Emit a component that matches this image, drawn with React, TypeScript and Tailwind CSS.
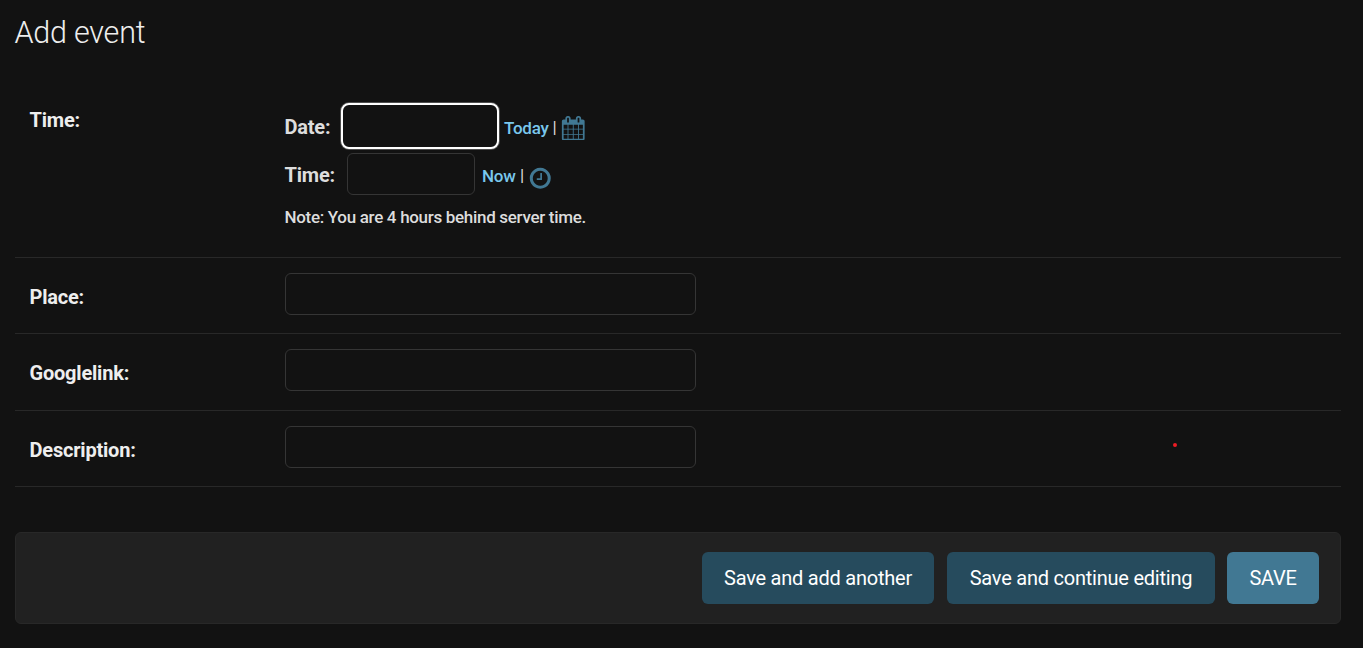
import type { ReactNode } from "react";

const CALENDAR =
  "M192 1664h288v-288h-288v288zm352 0h320v-288h-320v288zm-352-352h288v-320h-288v320zm352 0h320v-320h-320v320zm-352-384h288v-288h-288v288zm736 736h320v-288h-320v288zm-384-736h320v-288h-320v288zm768 736h288v-288h-288v288zm-384-352h320v-320h-320v320zm-352-864v-288q0-13-9.5-22.5t-22.5-9.5h-64q-13 0-22.5 9.5t-9.5 22.5v288q0 13 9.5 22.5t22.5 9.5h64q13 0 22.5-9.5t9.5-22.5zm736 864h288v-320h-288v320zm-384-384h320v-288h-320v288zm384 0h288v-288h-288v288zm32-480v-288q0-13-9.5-22.5t-22.5-9.5h-64q-13 0-22.5 9.5t-9.5 22.5v288q0 13 9.5 22.5t22.5 9.5h64q13 0 22.5-9.5t9.5-22.5zm384-64v1280q0 52-38 90t-90 38h-1408q-52 0-90-38t-38-90v-1280q0-52 38-90t90-38h128v-96q0-66 47-113t113-47h64q66 0 113 47t47 113v96h384v-96q0-66 47-113t113-47h64q66 0 113 47t47 113v96h128q52 0 90 38t38 90z";
const CLOCK =
  "M1024 544v448q0 14-9 23t-23 9h-320q-14 0-23-9t-9-23v-64q0-14 9-23t23-9h224v-352q0-14 9-23t23-9h64q14 0 23 9t9 23zm416 352q0-148-73-273t-198-198-273-73-273 73-198 198-73 273 73 273 198 198 273 73 273-73 198-198 73-273zm224 0q0 209-103 385.5t-279.5 279.5-385.5 103-385.5-103-279.5-279.5-103-385.5 103-385.5 279.5-279.5 385.5-103 385.5 103 279.5 279.5 103 385.5z";

function Icon({ d, className }: { d: string; className: string }) {
  return (
    <svg viewBox="0 0 1792 1792" className={`size-[24.5px] shrink-0 fill-[#417893] ${className}`}>
      <path d={d} />
    </svg>
  );
}

function Row({ label, height }: { label: string; height: string }) {
  return (
    <div className={`flex border-b border-[#282828] pt-[15px] pl-[14.5px] ${height}`}>
      <label className="w-[255.5px] pt-[9px] text-[20px] leading-[30px] font-bold tracking-[-0.2px] text-[#eeeeee]">{label}</label>
      <input className="h-[42px] w-[411px] rounded-[6px] border border-[#353535] bg-[#121212]" />
    </div>
  );
}

function Button({ children, className }: { children: ReactNode; className: string }) {
  return (
    <button className={`h-[52px] rounded-[6px] text-[20px] leading-[52px] whitespace-nowrap text-white ${className}`}>
      {children}
    </button>
  );
}

export default function App() {
  return (
    <div className="relative h-[648px] w-full overflow-hidden bg-[#121212] pr-[22px] pl-[15px] font-['Roboto',sans-serif] text-[#dddddd]">
      <h1 className="-ml-[0.5px] h-[86px] pt-[15px] text-[30.5px] leading-[36px] font-light tracking-[-0.22px] text-[#eeeeee]">Add event</h1>
      <form>
        <div className="flex h-[172px] border-b border-[#282828] pl-[14.5px]">
          <label className="w-[255px] pt-[19px] text-[20px] leading-[30px] font-bold tracking-[-0.2px] text-[#eeeeee]">Time:</label>
          <div className="pt-[17px]">
            <div className="flex h-[46px] items-center">
              <span className="w-[56.5px] pt-[2px] text-[20px] font-bold tracking-[-0.2px]">Date:</span>
              <input className="h-[46px] w-[158px] rounded-[8px] border-2 border-white bg-[#121212] shadow-[0_0_0_1px_rgba(255,255,255,0.25)]" />
              <span className="w-[49px] pt-[5px] pl-[5px] text-[17px] font-medium tracking-[-0.25px] text-[#79c7ec]">Today</span>
              <span className="w-[9px] pt-[4px] pl-[4.5px] text-[17px]">|</span>
              <Icon d={CALENDAR} className="mt-[4px] ml-[4px]" />
            </div>
            <div className="mt-[4px] flex h-[42px] items-center">
              <span className="w-[62.5px] pt-[2px] text-[20px] font-bold tracking-[-0.2px]">Time:</span>
              <input className="h-[42px] w-[128px] rounded-[6px] border border-[#353535] bg-[#121212]" />
              <span className="w-[41px] pt-[5px] pl-[7px] text-[17px] font-medium tracking-[-0.2px] text-[#79c7ec]">Now</span>
              <span className="w-[8px] pt-[4px] pl-[4px] text-[17px]">|</span>
              <Icon d={CLOCK} className="mt-[8px] ml-[3.5px]" />
            </div>
            <p className="mt-[9px] text-[17px] leading-[26px] font-medium tracking-[-0.31px]">Note: You are 4 hours behind server time.</p>
          </div>
        </div>
        <Row label="Place:" height="h-[76px]" />
        <Row label="Googlelink:" height="h-[77px]" />
        <Row label="Description:" height="h-[76px]" />
        <div className="mt-[45px] flex h-[92px] justify-end rounded-[6px] border border-[#282828] bg-[#212121] pt-[19px] pr-[21px]">
          <Button className="mr-[13px] w-[232px] bg-[#264b5d] tracking-[-0.23px]">Save and add another</Button>
          <Button className="mr-[12px] w-[268px] bg-[#264b5d] tracking-[-0.23px]">Save and continue editing</Button>
          <Button className="w-[92px] bg-[#417893] tracking-[-0.3px]">SAVE</Button>
        </div>
      </form>
      <span className="absolute top-[443px] left-[1172.5px] size-[4px] rounded-full bg-[#ed1c24]" />
    </div>
  );
}
